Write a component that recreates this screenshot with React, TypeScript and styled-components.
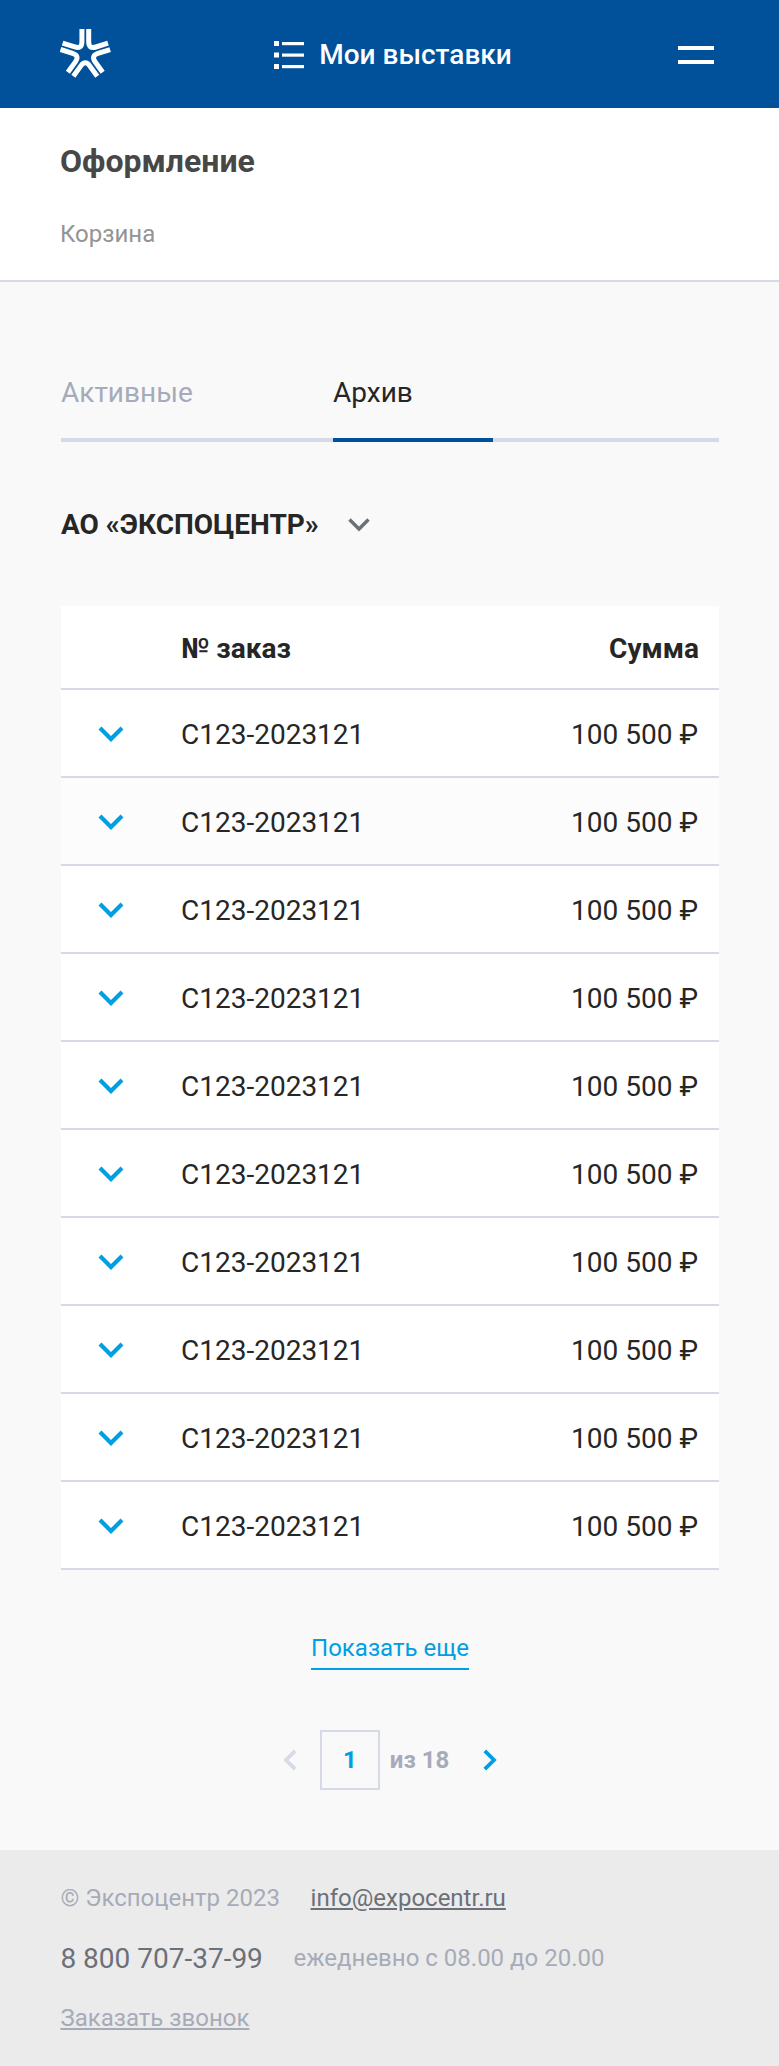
import React from "react";
import styled, { createGlobalStyle } from "styled-components";

const GlobalStyle = createGlobalStyle`
  *, *::before, *::after { box-sizing: border-box; }
  body { margin: 0; background: #f9f9f9; }
  button { font: inherit; border: 0; padding: 0; background: none; cursor: pointer; }
  svg { display: block; flex: none; }
`;

const Page = styled.div`
  width: 779px;
  height: 2066px;
  display: flex;
  flex-direction: column;
  background: #f9f9f9;
  color: #262626;
  font-family: Roboto, "Liberation Sans", sans-serif;
  font-size: 28px;
  line-height: 36px;
`;

const Header = styled.header`
  flex: none;
  height: 108px;
  padding: 0 65px 0 60px;
  display: flex;
  align-items: center;
  justify-content: space-between;
  background: #005199;
  color: #fff;
`;

const HeaderLink = styled.a`
  display: flex;
  align-items: center;
  gap: 15px;
  margin: 2px 3px 0 0;
  font-weight: 500;
`;

const Burger = styled.button`
  width: 36px;
  height: 18px;
  margin-top: 2px;
  border-top: 4px solid #fff;
  border-bottom: 4px solid #fff;
`;

const TitleBlock = styled.section`
  flex: none;
  height: 174px;
  padding: 33px 60px 0;
  background: #fff;
  border-bottom: 2px solid #d6dae6;
`;

const Title = styled.h1`
  margin: 0;
  font-size: 32px;
  line-height: 40px;
  font-weight: 700;
  color: #474747;
`;

const Crumb = styled.div`
  margin-top: 37px;
  font-size: 24px;
  line-height: 32px;
  color: #949494;
`;

const Main = styled.main`
  flex: 1;
  padding: 92px 60px 0 61px;
`;

const Tabs = styled.nav`
  display: flex;
  gap: 112px;
  height: 68px;
  border-bottom: 4px solid #d6dae6;
`;

const Tab = styled.button<{ $active?: boolean }>`
  flex: none;
  width: 160px;
  height: 68px;
  padding-bottom: 26px;
  text-align: left;
  line-height: 36px;
  color: ${(p) => (p.$active ? "#262626" : "#a6abb9")};
  border-bottom: 4px solid ${(p) => (p.$active ? "#005199" : "transparent")};
`;

const Company = styled.button`
  display: flex;
  align-items: center;
  gap: 29px;
  height: 36px;
  margin-top: 65px;
  font-weight: 700;
  color: #262626;
`;

const Table = styled.div`
  margin-top: 63px;
  background: #fff;
`;

const Row = styled.div<{ $head?: boolean; $tinted?: boolean }>`
  display: grid;
  grid-template-columns: 120px 1fr auto;
  align-items: center;
  height: ${(p) => (p.$head ? 84 : 88)}px;
  padding-right: ${(p) => (p.$head ? 20 : 21)}px;
  padding-top: 4px;
  border-bottom: 2px solid #d6dae6;
  font-weight: ${(p) => (p.$head ? 700 : 400)};
  background: ${(p) => (p.$tinted ? "#fcfcfc" : "#fff")};
`;

const Expand = styled.button`
  width: 26px;
  margin: 0 0 2px 37px;
`;

const More = styled.button`
  display: block;
  height: 40px;
  margin: 60px auto 0;
  padding-bottom: 2px;
  border-bottom: 2px solid #009fe3;
  font-size: 24px;
  line-height: 36px;
  color: #009fe3;
`;

const Pager = styled.div`
  display: flex;
  justify-content: center;
  align-items: center;
  height: 60px;
  margin-top: 60px;
  font-size: 24px;
  font-weight: 700;
  color: #a6abb9;
`;

const PageBox = styled.div`
  width: 60px;
  height: 60px;
  margin: 0 10px 0 23px;
  border: 2px solid #d6dae6;
  line-height: 57px;
  text-align: center;
  color: #009fe3;
`;

const PageTotal = styled.span`
  margin-right: 34px;
`;

const Footer = styled.footer`
  flex: none;
  height: 216px;
  padding: 28px 60.4px;
  background: #ebebeb;
  color: #a6abb9;
  font-size: 24px;
`;

const FooterRow = styled.div`
  display: flex;
  align-items: center;
  gap: 30.6px;
  height: 40px;
  margin-bottom: 20px;
  line-height: 40px;
`;

const FooterLink = styled.a<{ $dark?: boolean }>`
  color: ${(p) => (p.$dark ? "#6b7079" : "inherit")};
  text-decoration: underline;
`;

const Phone = styled.span`
  padding-top: 2px;
  font-size: 28px;
  color: #6b7079;
`;

const Logo = () => (
  <svg width="51" height="52" viewBox="-25.3 -26 51 52" fill="none" stroke="#fff" strokeWidth="5">
    {[0, 72, 144, 216, 288].map((a) => (
      <path key={a} transform={`rotate(${a})`} d="M3.4 -25 V-12.2 Q3.4 -4.7 10.6 -7 L22.7 -10.9" />
    ))}
  </svg>
);

const ListIcon = () => (
  <svg width="30" height="28" viewBox="0 0 30 28" fill="#fff">
    {[0, 11.5, 23].map((y) => (
      <g key={y}>
        <rect x="0" y={y} width="5" height="5" />
        <rect x="8" y={y + 1} width="22" height="3.2" />
      </g>
    ))}
  </svg>
);

const RowChevron = () => (
  <svg width="26" height="17" viewBox="0 0 26 17" fill="none" stroke="#009fe3" strokeWidth="4.2">
    <path d="M2 2 L13 13 L24 2" />
  </svg>
);

const CompanyChevron = () => (
  <svg width="22" height="14" viewBox="0 0 22 14" fill="none" stroke="#6b7079" strokeWidth="3.4">
    <path d="M1.5 1.5 L11 11 L20.5 1.5" />
  </svg>
);

const PagerChevron = ({ next }: { next?: boolean }) => (
  <svg width="14" height="22" viewBox="0 0 14 22" fill="none" stroke={next ? "#009fe3" : "#d6dae6"} strokeWidth="3.8">
    <path d={next ? "M1.8 1.8 L11 11 L1.8 20.2" : "M12.2 1.8 L3 11 L12.2 20.2"} />
  </svg>
);

const orders = Array.from({ length: 10 }, () => ({ number: "С123-2023121", sum: "100 500 ₽" }));

export default function App() {
  return (
    <>
      <GlobalStyle />
      <Page>
        <Header>
          <Logo />
          <HeaderLink>
            <ListIcon />
            Мои выставки
          </HeaderLink>
          <Burger aria-label="Меню" />
        </Header>
        <TitleBlock>
          <Title>Оформление</Title>
          <Crumb>Корзина</Crumb>
        </TitleBlock>
        <Main>
          <Tabs>
            <Tab>Активные</Tab>
            <Tab $active>Архив</Tab>
          </Tabs>
          <Company>
            АО «ЭКСПОЦЕНТР»
            <CompanyChevron />
          </Company>
          <Table>
            <Row $head>
              <span />
              <span>№ заказ</span>
              <span>Сумма</span>
            </Row>
            {orders.map((o, i) => (
              <Row key={i} $tinted={i === 1}>
                <Expand aria-label="Подробнее">
                  <RowChevron />
                </Expand>
                <span>{o.number}</span>
                <span>{o.sum}</span>
              </Row>
            ))}
          </Table>
          <More>Показать еще</More>
          <Pager>
            <PagerChevron />
            <PageBox>1</PageBox>
            <PageTotal>из 18</PageTotal>
            <PagerChevron next />
          </Pager>
        </Main>
        <Footer>
          <FooterRow>
            <span>© Экспоцентр 2023</span>
            <FooterLink $dark>info@expocentr.ru</FooterLink>
          </FooterRow>
          <FooterRow>
            <Phone>8 800 707-37-99</Phone>
            <span>ежедневно с 08.00 до 20.00</span>
          </FooterRow>
          <FooterRow>
            <FooterLink>Заказать звонок</FooterLink>
          </FooterRow>
        </Footer>
      </Page>
    </>
  );
}
